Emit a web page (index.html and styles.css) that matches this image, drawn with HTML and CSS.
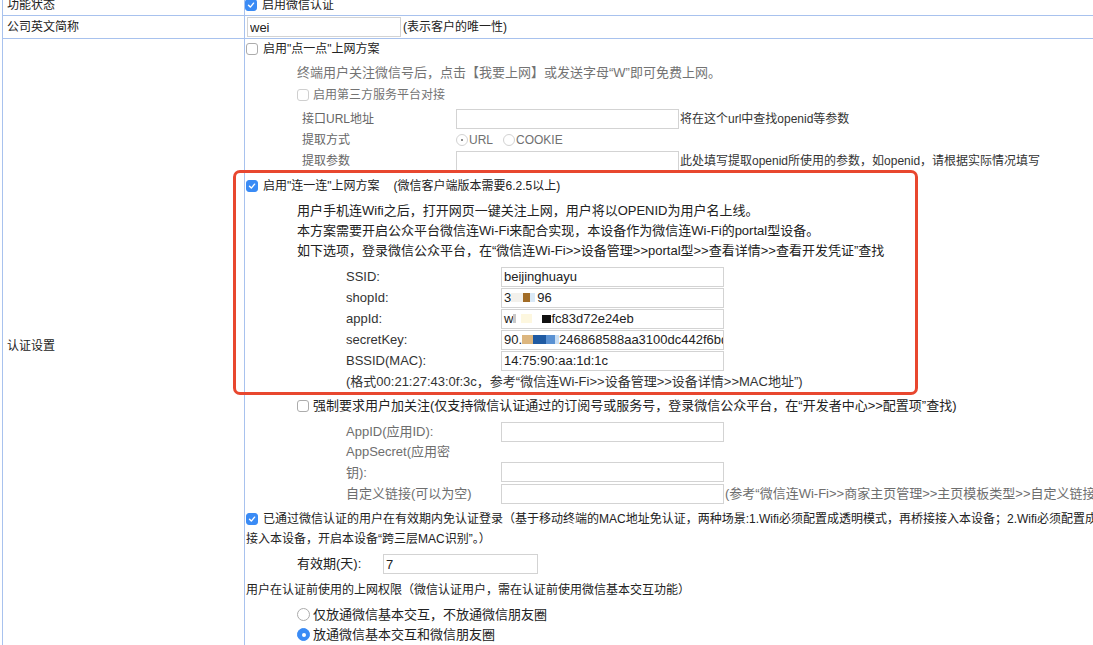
FILE: index.html
```html
<!DOCTYPE html>
<html lang="zh-CN">
<head>
    <meta charset="UTF-8">
    <title>认证设置</title>
    <link rel="stylesheet" href="styles.css">
</head>
<body>
    <table class="cfg">
        <tr class="r1">
            <td class="lbl">功能状态</td>
            <td class="val"><span class="cb on"><svg viewBox="0 0 12 12"><path d="M3 6.3 L5.2 8.5 L9.1 3.8"/></svg></span>启用微信认证</td>
        </tr>
        <tr class="r2">
            <td class="lbl">公司英文简称</td>
            <td class="val"><input class="box w-name" value="wei" readonly><span class="tip">(表示客户的唯一性)</span></td>
        </tr>
        <tr>
            <td class="lbl">认证设置</td>
            <td class="val main">
                <div class="line"><span class="cb"></span>启用"点一点"上网方案</div>
                <div class="line note">终端用户关注微信号后，点击【我要上网】或发送字母“W”即可免费上网。</div>
                <div class="line note"><span class="cb off"></span>启用第三方服务平台对接</div>

                <div class="kv kv-sub">
                    <span>接口URL地址</span><input class="box" readonly><span class="hint">将在这个url中查找openid等参数</span>
                    <span>提取方式</span>
                    <span class="modes"><span class="rd dis-on"></span>URL<span class="rd gap"></span>COOKIE</span>
                    <span></span>
                    <span>提取参数</span><input class="box" readonly><span class="hint">此处填写提取openid所使用的参数，如openid，请根据实际情况填写</span>
                </div>

                <div class="wx">
                    <div class="line"><span class="cb on"><svg viewBox="0 0 12 12"><path d="M3 6.3 L5.2 8.5 L9.1 3.8"/></svg></span>启用"连一连"上网方案<span class="ver">(微信客户端版本需要6.2.5以上)</span></div>
                    <div class="desc">
                        <p>用户手机连Wifi之后，打开网页一键关注上网，用户将以OPENID为用户名上线。</p>
                        <p>本方案需要开启公众平台微信连Wi-Fi来配合实现，本设备作为微信连Wi-Fi的portal型设备。</p>
                        <p>如下选项，登录微信公众平台，在“微信连Wi-Fi&gt;&gt;设备管理&gt;&gt;portal型&gt;&gt;查看详情&gt;&gt;查看开发凭证”查找</p>
                    </div>
                    <div class="kv kv-wx">
                        <span>SSID:</span><div class="box">beijinghuayu</div>
                        <span>shopId:</span><div class="box">3<span class="mz m-pale"></span><span class="mz m-brown"></span><span class="mz m-sky"></span>96</div>
                        <span>appId:</span><div class="box">w<span class="mz m-thin"></span><span class="mz m-cream"></span><span class="mz m-gap"></span><span class="mz m-black"></span>fc83d72e24eb</div>
                        <span>secretKey:</span><div class="box">90.<span class="mz m-tan"></span><span class="mz m-navy"></span><span class="mz m-blue"></span><span class="mz m-ice"></span>246868588aa3100dc442f6bd</div>
                        <span>BSSID(MAC):</span><div class="box">14:75:90:aa:1d:1c</div>
                    </div>
                    <div class="line mac">(格式00:21:27:43:0f:3c，参考“微信连Wi-Fi&gt;&gt;设备管理&gt;&gt;设备详情&gt;&gt;MAC地址”)</div>
                </div>

                <div class="line force"><span class="cb"></span>强制要求用户加关注(仅支持微信认证通过的订阅号或服务号，登录微信公众平台，在“开发者中心&gt;&gt;配置项”查找)</div>
                <div class="kv kv-force">
                    <span>AppID(应用ID):</span><input class="box" readonly><span></span>
                    <span class="two">AppSecret(应用密<br>钥):</span><input class="box low" readonly><span></span>
                    <span>自定义链接(可以为空)</span><input class="box" readonly><span class="hint">(参考“微信连Wi-Fi&gt;&gt;商家主页管理&gt;&gt;主页模板类型&gt;&gt;自定义链接”获取)</span>
                </div>

                <div class="free">
                    <span class="cb on"><svg viewBox="0 0 12 12"><path d="M3 6.3 L5.2 8.5 L9.1 3.8"/></svg></span>已通过微信认证的用户在有效期内免认证登录（基于移动终端的MAC地址免认证，两种场景:1.Wifi必须配置成透明模式，再桥接接入本设备；2.Wifi必须配置成路由模式，其出口<br>接入本设备，开启本设备“跨三层MAC识别”。）
                </div>
                <div class="days"><span class="days-lbl">有效期(天):</span><input class="box w-days" value="7" readonly></div>
                <div class="line">用户在认证前使用的上网权限（微信认证用户，需在认证前使用微信基本交互功能）</div>
                <div class="line pick first"><span class="rd"></span>仅放通微信基本交互，不放通微信朋友圈</div>
                <div class="line pick"><span class="rd on"></span>放通微信基本交互和微信朋友圈</div>
            </td>
        </tr>
    </table>
</body>
</html>
```

FILE: styles.css
```css
html, body {
    overflow: hidden;
}
body {
    margin: 0;
    font-family: "Liberation Sans", "Noto Sans CJK SC", sans-serif;
    font-size: 12px;
    color: #222;
    background: #fff;
}
p {
    margin: 0;
}
.cfg {
    border-collapse: collapse;
    margin: -7px 0 0 2px;
    width: 1400px;
    table-layout: fixed;
}
.cfg td {
    border: 1px solid #a8c2ee;
    padding: 0 1px;
    line-height: 20px;
}
.cfg td.lbl {
    width: 236px;
    padding-left: 4px;
}
.r1 td {
    height: 21px;
}
.r1 .cb {
    margin-left: -1px;
}
.r2 td {
    height: 22px;
}
.val.main {
    vertical-align: top;
    padding-bottom: 7px;
}

/* fake form controls */
.box {
    display: flex;
    align-items: center;
    box-sizing: border-box;
    width: 223px;
    height: 20px;
    margin: 0;
    padding: 0 2px;
    border: 1px solid #d3d3d3;
    background: #fff;
    font-family: inherit;
    font-size: 13px;
    color: #222;
    white-space: nowrap;
    overflow: hidden;
    outline: none;
}
input.box {
    display: inline-block;
    vertical-align: middle;
}
.w-name {
    width: 154px;
    margin-left: 1px;
}
.w-days {
    width: 155px;
}
.tip {
    margin-left: 2px;
    vertical-align: middle;
}
.cb {
    display: inline-block;
    box-sizing: border-box;
    width: 12px;
    height: 12px;
    margin-right: 5px;
    border: 1px solid #acacac;
    border-radius: 3px;
    background: #fff;
    vertical-align: -2px;
}
.cb.off {
    border-color: #cfcfcf;
}
.cb.on {
    border-color: #3a8bf5;
    background: #3a8bf5;
}
.cb svg {
    display: block;
    width: 10px;
    height: 10px;
}
.cb svg path {
    fill: none;
    stroke: #fff;
    stroke-width: 1.7;
    stroke-linecap: round;
    stroke-linejoin: round;
}
.rd {
    display: inline-block;
    box-sizing: border-box;
    width: 13px;
    height: 13px;
    border: 1px solid #ababab;
    border-radius: 50%;
    background: #fff;
    vertical-align: -2px;
    position: relative;
}
.rd.on {
    border-color: #3a8bf5;
    background: #3a8bf5;
}
.rd.on::after,
.rd.dis-on::after {
    content: "";
    position: absolute;
    left: 3.5px;
    top: 3.5px;
    width: 4px;
    height: 4px;
    border-radius: 50%;
    background: #fff;
}
.rd.dis-on {
    width: 12px;
    height: 12px;
    border-color: #d2d2d2;
}
.rd.dis-on::after {
    left: 4px;
    top: 4px;
    width: 2px;
    height: 2px;
    background: #666;
}

.line {
    height: 20px;
    line-height: 20px;
    white-space: nowrap;
}
.note {
    margin-top: 4px;
    padding-left: 51px;
    font-size: 13px;
    color: #737373;
}
.note + .note {
    margin-top: 2px;
    font-size: 12px;
}
.note .cb {
    margin-right: 4px;
}

.kv {
    display: grid;
    align-items: center;
    white-space: nowrap;
}
.kv-sub {
    margin-top: 3px;
    padding-left: 56px;
    grid-template-columns: 154px 223px auto;
    grid-auto-rows: 21px;
    color: #666;
}
.kv-sub .hint {
    color: #333;
    padding-left: 1px;
}
.modes {
    display: flex;
    align-items: center;
    color: #707070;
}
.modes .rd {
    margin-right: 1px;
}
.modes .gap {
    margin-left: 10px;
    width: 12px;
    height: 12px;
    border-color: #d2d2d2;
}

.wx {
    position: relative;
    margin-top: 5px;
}
/* red annotation frame drawn over the section */
.wx::after {
    content: "";
    position: absolute;
    left: -13px;
    top: -6px;
    width: 685px;
    height: 225px;
    box-sizing: border-box;
    border: 3px solid #e8472f;
    border-radius: 7px;
    pointer-events: none;
}
.ver {
    margin-left: 14px;
}
.desc {
    margin-top: 5px;
    padding-left: 51px;
    font-size: 13px;
    line-height: 20px;
}
.kv-wx {
    margin-top: 5px;
    padding-left: 100px;
    grid-template-columns: 155px 223px;
    grid-auto-rows: 21px;
    font-size: 13px;
    color: #333;
}
.mz {
    display: inline-block;
    height: 9px;
    flex: none;
}
.m-pale { width: 12px; background: #f3f1ec; }
.m-brown { width: 7px; background: #a26c26; }
.m-sky { width: 5px; background: #d9e9f7; margin-right: 2px; }
.m-thin { width: 3px; background: #c9c9c9; }
.m-cream { width: 11px; background: #fdf7df; margin-left: 5px; }
.m-gap { width: 10px; }
.m-black { width: 9px; height: 8px; background: #111; }
.m-tan { width: 11px; background: #dcb67f; }
.m-navy { width: 13px; background: #1f5aa2; }
.m-blue { width: 9px; background: #5a91d2; }
.m-ice { width: 4px; background: #c9def3; }
.mac {
    padding-left: 100px;
    font-size: 13px;
    height: 21px;
    line-height: 21px;
    color: #333;
}

.force {
    margin-top: 4px;
    padding-left: 51px;
    font-size: 13px;
}
.force .cb {
    margin-right: 4px;
}
.kv-force {
    margin-top: 5px;
    padding-left: 100px;
    grid-template-columns: 155px 223px auto;
    grid-template-rows: 21px 41px 21px;
    font-size: 13px;
    color: #6e6e6e;
}
.kv-force .two {
    line-height: 20.5px;
}
.kv-force .low {
    align-self: end;
    margin-bottom: 1px;
}
.kv-force .hint {
    padding-left: 1px;
}

.free {
    margin-top: 5px;
    line-height: 20px;
    white-space: nowrap;
}
.days {
    display: flex;
    align-items: center;
    height: 22px;
    margin-top: 4px;
    padding-left: 51px;
    font-size: 13px;
}
.days-lbl {
    width: 86px;
}
.days + .line {
    margin-top: 5px;
}
.pick {
    padding-left: 51px;
    font-size: 13px;
}
.pick.first {
    margin-top: 5px;
}
.pick .rd {
    margin-right: 3px;
}
```
